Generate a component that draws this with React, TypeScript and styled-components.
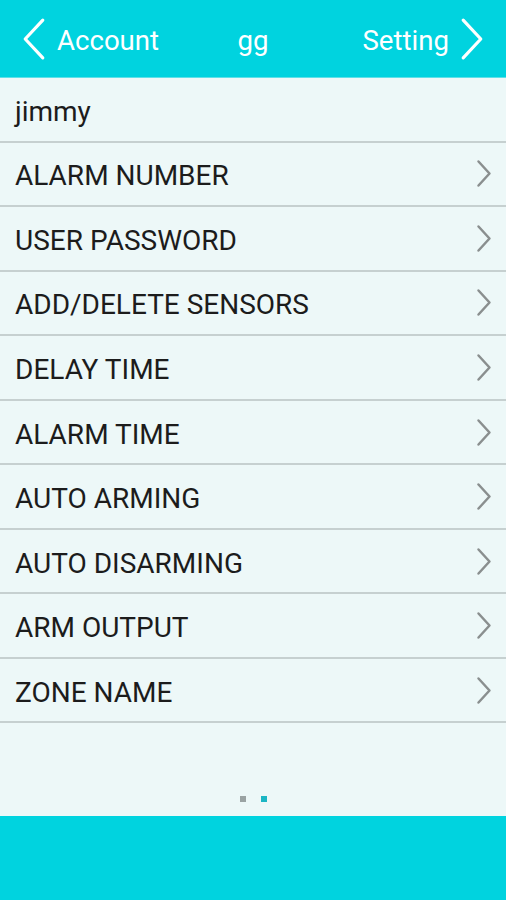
import React from "react";
import styled, { createGlobalStyle } from "styled-components";

const Global = createGlobalStyle`
  html, body { margin: 0; padding: 0; }
  body { font-family: Roboto, "Noto Sans", sans-serif; background: #edf8f8; }
`;

const Screen = styled.div`
  width: 506px;
  height: 900px;
  display: flex;
  flex-direction: column;
  background: #edf8f8;
`;

const Header = styled.header`
  height: 77px;
  background: #00d3df;
  display: grid;
  grid-template-columns: 1fr auto 1fr;
  align-items: center;
  color: #ffffff;
  font-size: 27.6px;
  border-bottom: 1px solid #5fe0e8;
`;

const NavSide = styled.div<{ $right?: boolean }>`
  display: flex;
  align-items: center;
  justify-content: ${(p) => (p.$right ? "flex-end" : "flex-start")};
  gap: 11px;
  padding: ${(p) => (p.$right ? "0 22px 0 0" : "0 0 0 22px")};
`;

const Label = styled.span`
  padding-top: 4px;
`;

const Title = styled.div`
  padding-top: 4px;
`;

const List = styled.div`
  display: flex;
  flex-direction: column;
`;

const Row = styled.div`
  height: 64.56px;
  box-sizing: border-box;
  border-bottom: 2px solid #c6d0d0;
  display: flex;
  align-items: center;
  justify-content: space-between;
  padding: 0 14px 0 15px;
  font-size: 28px;
  color: #1c1c1c;
`;

const RowText = styled.span`
  padding-top: 4px;
`;

const Spacer = styled.div`
  flex: 1;
  display: flex;
  align-items: flex-end;
  justify-content: center;
  gap: 15px;
  padding-bottom: 14px;
`;

const Dot = styled.span<{ $active?: boolean }>`
  width: 6px;
  height: 6px;
  background: ${(p) => (p.$active ? "#1bb6c4" : "#9aa3a3")};
`;

const Footer = styled.div`
  height: 84px;
  background: #00d3df;
`;

const Chevron = ({ dir, color, w, h, sw }: { dir: "l" | "r"; color: string; w: number; h: number; sw: number }) => (
  <svg width={w} height={h} viewBox={`0 0 ${w} ${h}`} fill="none">
    <polyline
      points={
        dir === "l"
          ? `${w - sw},${sw} ${sw},${h / 2} ${w - sw},${h - sw}`
          : `${sw},${sw} ${w - sw},${h / 2} ${sw},${h - sw}`
      }
      stroke={color}
      strokeWidth={sw}
      strokeLinecap="round"
      strokeLinejoin="round"
    />
  </svg>
);

const items = [
  "ALARM NUMBER",
  "USER PASSWORD",
  "ADD/DELETE SENSORS",
  "DELAY TIME",
  "ALARM TIME",
  "AUTO ARMING",
  "AUTO DISARMING",
  "ARM OUTPUT",
  "ZONE NAME",
];

export default function App() {
  return (
    <>
      <Global />
      <Screen>
        <Header>
          <NavSide>
            <Chevron dir="l" color="#ffffff" w={24} h={44} sw={3.2} />
            <Label>Account</Label>
          </NavSide>
          <Title>gg</Title>
          <NavSide $right>
            <Label>Setting</Label>
            <Chevron dir="r" color="#ffffff" w={24} h={44} sw={3.2} />
          </NavSide>
        </Header>
        <List>
          <Row>
            <RowText>jimmy</RowText>
          </Row>
          {items.map((t) => (
            <Row key={t}>
              <RowText>{t}</RowText>
              <Chevron dir="r" color="#8a8f8f" w={16} h={29} sw={2.5} />
            </Row>
          ))}
        </List>
        <Spacer>
          <Dot />
          <Dot $active />
        </Spacer>
        <Footer />
      </Screen>
    </>
  );
}
